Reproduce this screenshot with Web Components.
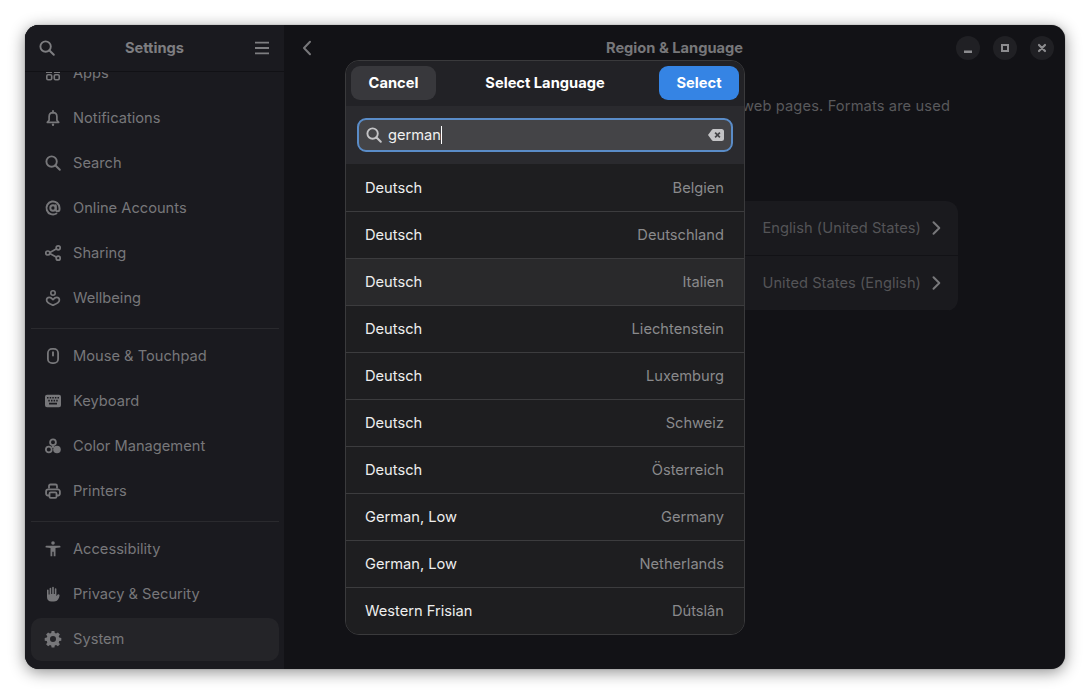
<!DOCTYPE html>
<html>
<head>
<meta charset="utf-8">
<title>Settings</title>
<style>
  html, body { margin: 0; height: 100%; background: #fff; overflow: hidden; }
  body { padding: 25px; box-sizing: border-box; font: 14.67px "Inter", "Noto Sans", sans-serif; }
</style>
</head>
<body>
<settings-window>
  <side-row slot="side" icon="apps" label="Apps"></side-row>
  <side-row slot="side" icon="bell" label="Notifications"></side-row>
  <side-row slot="side" icon="search" label="Search"></side-row>
  <side-row slot="side" icon="at" label="Online Accounts"></side-row>
  <side-row slot="side" icon="share" label="Sharing"></side-row>
  <side-row slot="side" icon="well" label="Wellbeing"></side-row>
  <side-sep slot="side"></side-sep>
  <side-row slot="side" icon="mouse" label="Mouse &amp; Touchpad"></side-row>
  <side-row slot="side" icon="keyboard" label="Keyboard"></side-row>
  <side-row slot="side" icon="color" label="Color Management"></side-row>
  <side-row slot="side" icon="printer" label="Printers"></side-row>
  <side-sep slot="side"></side-sep>
  <side-row slot="side" icon="access" label="Accessibility"></side-row>
  <side-row slot="side" icon="hand" label="Privacy &amp; Security"></side-row>
  <side-row slot="side" icon="gear" label="System" selected></side-row>

  <pref-row slot="prefs" value="English (United States)"></pref-row>
  <pref-row slot="prefs" value="United States (English)"></pref-row>

  <language-dialog slot="dialog">
    <lang-row name="Deutsch" region="Belgien"></lang-row>
    <lang-row name="Deutsch" region="Deutschland"></lang-row>
    <lang-row name="Deutsch" region="Italien" hover></lang-row>
    <lang-row name="Deutsch" region="Liechtenstein"></lang-row>
    <lang-row name="Deutsch" region="Luxemburg"></lang-row>
    <lang-row name="Deutsch" region="Schweiz"></lang-row>
    <lang-row name="Deutsch" region="Österreich"></lang-row>
    <lang-row name="German, Low" region="Germany"></lang-row>
    <lang-row name="German, Low" region="Netherlands"></lang-row>
    <lang-row name="Western Frisian" region="Dútslân"></lang-row>
  </language-dialog>
</settings-window>

<script>
const ICONS = {
  search: '<circle cx="6.6" cy="6.6" r="5.2" fill="none" stroke="currentColor" stroke-width="1.9"/><path d="M10.5 10.5l4.300 4.300" fill="none" stroke="currentColor" stroke-width="2" stroke-linecap="round"/>',
  menu: '<path d="M1 2.700h14M1 8h14M1 13.300h14" fill="none" stroke="currentColor" stroke-width="1.800"/>',
  back: '<path d="M10 1.800L4 8l6 6.200" fill="none" stroke="currentColor" stroke-width="2" stroke-linecap="round" stroke-linejoin="round"/>',
  next: '<path d="M5.500 2.200L11.300 8l-5.800 5.800" fill="none" stroke="currentColor" stroke-width="2" stroke-linecap="round" stroke-linejoin="round"/>',
  apps: '<path d="M1 6.500h6V8H1zM9 6.500h6V8H9z"/><rect x="1.800" y="9.800" width="4.900" height="4.900" rx="1.200" fill="none" stroke="currentColor" stroke-width="1.600"/><rect x="9.300" y="9.800" width="4.900" height="4.900" rx="1.200" fill="none" stroke="currentColor" stroke-width="1.600"/>',
  bell: '<path d="M8 2.600c-2.500 0-3.900 1.800-3.900 4.100v3.600L2.300 12.300h11.400l-1.800-2V6.700C11.900 4.400 10.500 2.600 8 2.600z" fill="none" stroke="currentColor" stroke-width="1.700" stroke-linejoin="round"/><path d="M8 .8v2" fill="none" stroke="currentColor" stroke-width="1.800" stroke-linecap="round"/><circle cx="8" cy="14.700" r="1.200"/>',
  at: '<circle cx="8" cy="8" r="2.700" fill="none" stroke="currentColor" stroke-width="2"/><path d="M10.700 5.300V9.300a1.900 1.900 0 0 0 3.800 0V8A6.500 6.500 0 1 0 11.400 13.500" fill="none" stroke="currentColor" stroke-width="2" stroke-linecap="round"/>',
  share: '<path d="M4 8l8-4.500M4 8l8 4.500" fill="none" stroke="currentColor" stroke-width="1.700"/><circle cx="2.800" cy="8" r="2" fill="#1a1a1f" stroke="currentColor" stroke-width="1.700"/><circle cx="13.200" cy="2.800" r="2" fill="#1a1a1f" stroke="currentColor" stroke-width="1.700"/><circle cx="13.200" cy="13.200" r="2" fill="#1a1a1f" stroke="currentColor" stroke-width="1.700"/>',
  well: '<circle cx="8" cy="3" r="2.200" fill="none" stroke="currentColor" stroke-width="1.600"/><path d="M8 15.200c-2.200-.8-6.400-2.200-6.400-5.100C1.600 8.500 2.900 7.400 4.300 7.400 5.900 7.400 7 8.500 8 9.600c1-1.100 2.100-2.200 3.700-2.200 1.400 0 2.700 1.100 2.700 2.700 0 2.900-4.200 4.300-6.400 5.100z" fill="none" stroke="currentColor" stroke-width="1.700" stroke-linejoin="round"/>',
  mouse: '<rect x="2.900" y=".9" width="10.200" height="14.200" rx="4.200" fill="none" stroke="currentColor" stroke-width="1.800"/><path d="M8 4.200v3.300" fill="none" stroke="currentColor" stroke-width="1.900" stroke-linecap="round"/>',
  keyboard: '<path fill-rule="evenodd" d="M2 1.800h12a2 2 0 0 1 2 2v8.400a2 2 0 0 1-2 2H2a2 2 0 0 1-2-2V3.800a2 2 0 0 1 2-2zM2 4v1.600h1.500V4zM4.700 4v1.600h1.500V4zM7.300 4v1.600h1.500V4zM9.900 4v1.600h1.500V4zM12.500 4v1.600H14V4zM3.300 6.800v1.600h1.500V6.800zM6 6.800v1.600h1.500V6.800zM8.600 6.800v1.600h1.500V6.800zM11.200 6.800v1.600h1.500V6.800zM4 9.800v1.800h8V9.800z"/>',
  color: '<circle cx="8" cy="4.200" r="2.900" fill="none" stroke="currentColor" stroke-width="1.800"/><circle cx="3.800" cy="11.500" r="2.900" fill="none" stroke="currentColor" stroke-width="1.800"/><circle cx="12" cy="11.500" r="3.800"/><circle cx="8" cy="8.800" r="1.300"/>',
  printer: '<path d="M4 5.500V3a1.500 1.500 0 0 1 1.500-1.500h5A1.500 1.500 0 0 1 12 3v2.500" fill="none" stroke="currentColor" stroke-width="1.800"/><path d="M4 12.500H3A1.700 1.700 0 0 1 1.100 10.800V8.500A2.100 2.100 0 0 1 3.200 6.400h9.600a2.100 2.100 0 0 1 2.100 2.100v2.300a1.700 1.700 0 0 1-1.900 1.700h-1" fill="none" stroke="currentColor" stroke-width="1.800"/><rect x="4.500" y="9.300" width="7" height="5.600" rx="1.200" fill="none" stroke="currentColor" stroke-width="1.800"/>',
  access: '<circle cx="8" cy="2" r="1.800"/><path d="M1.400 4.800h13.200a.9.900 0 0 1 0 1.800l-4.100.5V15.300H8.700V10.800H7.300V15.300H5.500V7.100L1.400 6.600a.9.900 0 0 1 0-1.800z"/>',
  hand: '<path d="M2 4.200a.8.8 0 0 1 1.600 0V8.500h1V2.500a.8.8 0 0 1 1.600 0V8h1V1.500a.8.8 0 0 1 1.600 0V8h1V3a.8.8 0 0 1 1.600 0V10.300l1.300-1.700a1.100 1.100 0 0 1 1.800 1.200C14 12.200 13 15.500 9 15.500H6.500C3.500 15.500 2 13.800 2 11z"/>',
  gear: '<path fill-rule="evenodd" d="M6.600 0h2.800l.4 2.100 1.300.5 1.800-1.200 2 2-1.200 1.800.5 1.300 2.100.4v2.800l-2.100.4-.5 1.300 1.200 1.800-2 2-1.800-1.200-1.300.5-.4 2.100H6.600l-.4-2.100-1.300-.5-1.800 1.200-2-2 1.200-1.800-.5-1.300L-.3 9.700V6.900l2.100-.4.5-1.300L1.100 3.400l2-2 1.800 1.200 1.300-.5zM8 5a3 3 0 1 0 0 6 3 3 0 0 0 0-6z"/>',
  clear: '<path fill-rule="evenodd" d="M5.200 2H13.500A2.500 2.500 0 0 1 16 4.500v7A2.500 2.500 0 0 1 13.500 14H5.200a1.500 1.500 0 0 1-1.100-.5L0 8l4.100-5.500A1.500 1.500 0 0 1 5.200 2zM7.700 5L6.500 6.200 8.300 8 6.500 9.800 7.700 11l1.800-1.800L11.300 11l1.200-1.200L10.700 8l1.800-1.800L11.300 5 9.500 6.800z"/>',
  min: '<path d="M4 10.500h8V13H4z"/>',
  max: '<path fill-rule="evenodd" d="M4 4h8v8H4zM6 6v4h4V6z"/>',
  close: '<path d="M5 5l6 6M11 5l-6 6" fill="none" stroke="currentColor" stroke-width="2.200" stroke-linecap="round"/>'
};

class SymIcon extends HTMLElement {
  connectedCallback() {
    const size = this.getAttribute('size') || 16;
    this.attachShadow({ mode: 'open' });
    this.shadowRoot.innerHTML = `
      <style>
        :host { display: inline-flex; flex: none; width: ${size}px; height: ${size}px; }
        svg { width: 100%; height: 100%; fill: currentColor; overflow: visible; }
      </style>
      <svg viewBox="0 0 16 16">${ICONS[this.getAttribute('name')]}</svg>`;
  }
}
customElements.define('sym-icon', SymIcon);

class SettingsWindow extends HTMLElement {
  constructor() {
    super();
    this.attachShadow({ mode: 'open' });
    this.shadowRoot.innerHTML = `
      <style>
        :host {
          display: flex;
          position: relative;
          width: 1040px;
          height: 644px;
          border-radius: 14px;
          background: #121216;
          box-shadow: 0 3px 16px rgba(0,0,0,.45), 0 0 1px rgba(0,0,0,.6);
          color: #77777a;
        }
        .side {
          width: 259px;
          flex: none;
          display: flex;
          flex-direction: column;
          background: #1a1a1f;
          border-radius: 14px 0 0 14px;
          overflow: hidden;
        }
        .side-head {
          height: 46px;
          flex: none;
          position: relative;
          z-index: 1;
          display: grid;
          grid-template-columns: 1fr auto 1fr;
          align-items: center;
          padding: 0 14px;
          background: #1a1a1f;
          border-bottom: 1px solid #111115;
          color: #7e7e81;
        }
        .side-head b { font-weight: 700; }
        .side-head .r { justify-self: end; }
        .side-list {
          display: flex;
          flex-direction: column;
          gap: 2px;
          padding: 0 5px 0 6px;
          margin-top: -21px;
        }
        .side-list ::slotted(*) { flex: none; }
        .main {
          flex: 1;
          min-width: 0;
          display: flex;
          flex-direction: column;
          overflow: hidden;
          border-radius: 0 14px 14px 0;
        }
        .main-head {
          height: 46px;
          flex: none;
          display: grid;
          grid-template-columns: 1fr auto 1fr;
          align-items: center;
          padding: 0 11px;
          color: #77777a;
        }
        .main-head b { font-weight: 700; }
        .main-head .back { margin-left: 5px; }
        .wm { justify-self: end; display: flex; gap: 13px; }
        .page {
          width: 568px;
          margin: 0 0 0 106px;
          padding-top: 25px;
        }
        .page p {
          margin: 0 0 84px;
          padding-right: 8px;
          line-height: 21px;
          color: #59595c;
          text-align: right;
          letter-spacing: .13px;
          white-space: nowrap;
        }
        .box {
          background: #1a1a1e;
          border-radius: 12px;
          overflow: hidden;
        }
      </style>
      <div class="side">
        <div class="side-head">
          <sym-icon name="search"></sym-icon>
          <b>Settings</b>
          <sym-icon class="r" name="menu"></sym-icon>
        </div>
        <div class="side-list"><slot name="side"></slot></div>
      </div>
      <div class="main">
        <div class="main-head">
          <sym-icon class="back" name="back"></sym-icon>
          <b>Region &amp; Language</b>
          <div class="wm">
            <wm-button icon="min"></wm-button>
            <wm-button icon="max"></wm-button>
            <wm-button icon="close"></wm-button>
          </div>
        </div>
        <div class="page">
          <p>web pages. Formats are used</p>
          <div class="box"><slot name="prefs"></slot></div>
        </div>
      </div>
      <slot name="dialog"></slot>`;
  }
}
customElements.define('settings-window', SettingsWindow);

class SideRow extends HTMLElement {
  constructor() {
    super();
    this.attachShadow({ mode: 'open' });
  }
  connectedCallback() {
    this.shadowRoot.innerHTML = `
      <style>
        :host {
          display: flex;
          align-items: center;
          gap: 12px;
          height: 43px;
          padding: 0 14px;
          border-radius: 10px;
          color: #77777a;
        }
        :host([selected]) {
          background: #242428;
          margin-top: 1px;
          box-sizing: border-box;
          padding-bottom: 2px;
        }
      </style>
      <sym-icon name="${this.getAttribute('icon')}"></sym-icon>
      <span>${this.getAttribute('label').replace('&', '&amp;')}</span>`;
  }
}
customElements.define('side-row', SideRow);

class SideSep extends HTMLElement {
  constructor() {
    super();
    this.attachShadow({ mode: 'open' });
    this.shadowRoot.innerHTML = `
      <style>
        :host { display: block; height: 1px; margin: 7px 0 3px; background: #2a2a2e; }
      </style>`;
  }
}
customElements.define('side-sep', SideSep);

class WmButton extends HTMLElement {
  constructor() {
    super();
    this.attachShadow({ mode: 'open' });
  }
  connectedCallback() {
    this.shadowRoot.innerHTML = `
      <style>
        :host {
          display: flex;
          align-items: center;
          justify-content: center;
          width: 24px;
          height: 24px;
          border-radius: 50%;
          background: #202024;
          color: #8c8c8f;
        }
      </style>
      <sym-icon name="${this.getAttribute('icon')}"></sym-icon>`;
  }
}
customElements.define('wm-button', WmButton);

class PrefRow extends HTMLElement {
  constructor() {
    super();
    this.attachShadow({ mode: 'open' });
  }
  connectedCallback() {
    this.shadowRoot.innerHTML = `
      <style>
        :host {
          display: flex;
          align-items: center;
          justify-content: flex-end;
          height: 54px;
          padding: 0 14px 0 12px;
          border-bottom: 1px solid #121216;
        }
        :host(:last-child) { border-bottom: 0; }
        .value { color: #545457; margin-right: 7px; letter-spacing: .04px; }
        sym-icon { color: #77777a; }
      </style>
      <span class="value">${this.getAttribute('value')}</span>
      <sym-icon name="next"></sym-icon>`;
  }
}
customElements.define('pref-row', PrefRow);

class LanguageDialog extends HTMLElement {
  constructor() {
    super();
    this.attachShadow({ mode: 'open' });
    this.shadowRoot.innerHTML = `
      <style>
        :host {
          position: absolute;
          left: 320px;
          top: 35px;
          width: 400px;
          height: 575px;
          box-sizing: border-box;
          display: flex;
          flex-direction: column;
          border: 1px solid #3a3a3c;
          border-radius: 14px;
          overflow: hidden;
          background: #1e1e20;
          color: #fff;
        }
        .head {
          height: 45px;
          box-sizing: border-box;
          flex: none;
          display: grid;
          grid-template-columns: 1fr auto 1fr;
          align-items: center;
          padding: 5px 5px 6px;
          background: #222226;
          font-weight: 700;
        }
        button {
          font: inherit;
          color: #fff;
          height: 34px;
          border: 0;
          border-radius: 9px;
          padding: 0;
        }
        .cancel { width: 85px; background: #38383c; justify-self: start; }
        .select { width: 80px; background: #3584e4; justify-self: end; }
        .search {
          height: 58px;
          flex: none;
          box-sizing: border-box;
          padding: 12px 11px;
          background: #2a2a2e;
        }
        .entry {
          height: 34px;
          box-sizing: border-box;
          display: flex;
          align-items: center;
          padding: 0 7px;
          border: 2px solid #5a8cc8;
          border-radius: 9px;
          background: #444447;
        }
        .entry .glass { color: #c4c4c6; margin-right: 6px; }
        .entry .text { flex: 1; color: #f0f0f0; display: flex; align-items: center; }
        .caret { display: inline-block; width: 1px; height: 18px; background: #fff; }
        .entry .x { color: #c4c4c6; }
        .list { flex: 1; display: flex; flex-direction: column; padding-top: 1px; }
      </style>
      <div class="head">
        <button class="cancel">Cancel</button>
        <span>Select Language</span>
        <button class="select">Select</button>
      </div>
      <div class="search">
        <div class="entry">
          <sym-icon class="glass" name="search"></sym-icon>
          <span class="text">german<i class="caret"></i></span>
          <sym-icon class="x" name="clear"></sym-icon>
        </div>
      </div>
      <div class="list"><slot></slot></div>`;
  }
}
customElements.define('language-dialog', LanguageDialog);

class LangRow extends HTMLElement {
  constructor() {
    super();
    this.attachShadow({ mode: 'open' });
  }
  connectedCallback() {
    this.shadowRoot.innerHTML = `
      <style>
        :host {
          display: flex;
          align-items: center;
          justify-content: space-between;
          height: 46px;
          padding: 0 20px 0 19px;
          color: #eeeeee;
          border-bottom: 1px solid #3c3c3e;
          background: #1e1e20;
        }
        :host([hover]) { background: #29292b; }
        :host(:last-child) { border-bottom: 0; }
        .region { color: #8a8a8c; }
      </style>
      <span>${this.getAttribute('name')}</span>
      <span class="region">${this.getAttribute('region')}</span>`;
  }
}
customElements.define('lang-row', LangRow);
</script>
</body>
</html>
